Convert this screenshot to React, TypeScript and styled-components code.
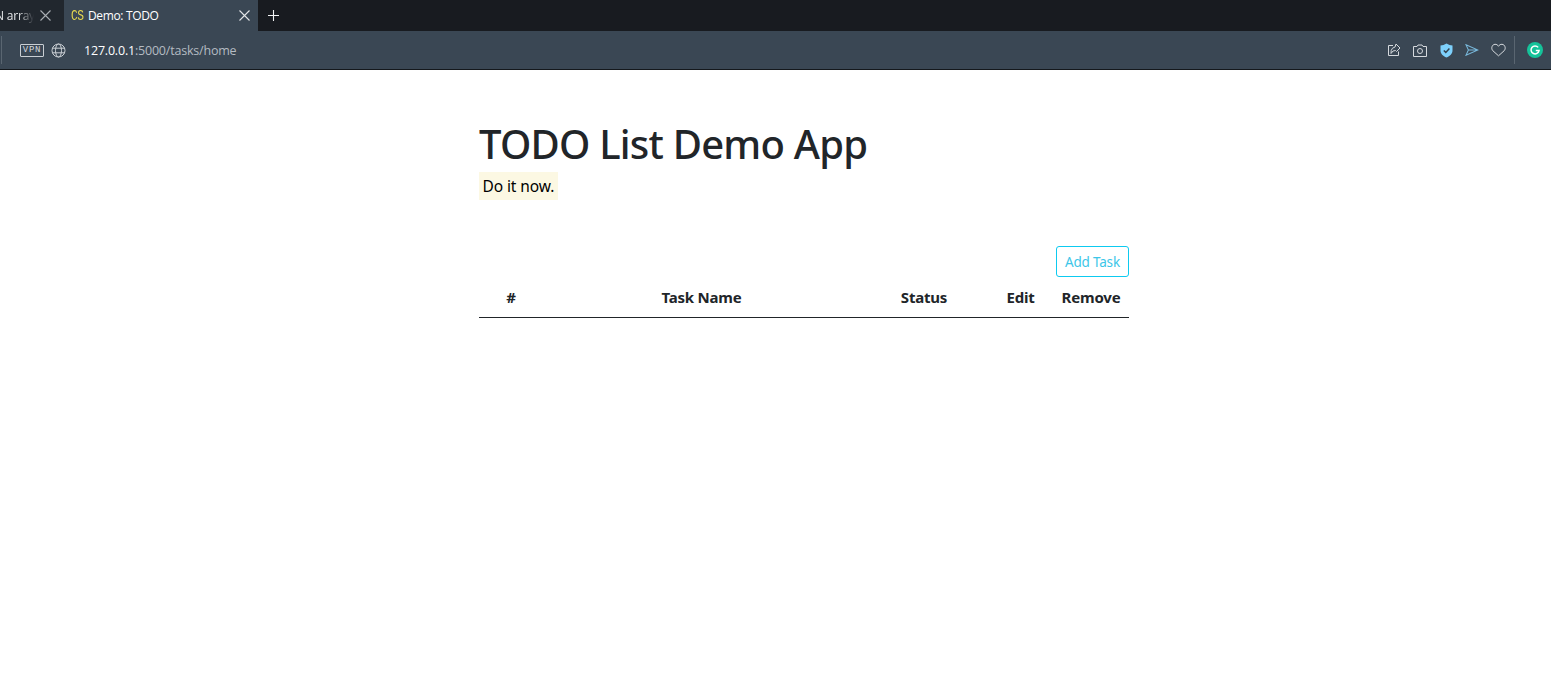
import { createGlobalStyle } from 'styled-components';
import styled from 'styled-components';

const GlobalStyle = createGlobalStyle`
  html, body {
    margin: 0;
    padding: 0;
    background: #fff;
  }
  body {
    font-family: "Noto Sans", "Open Sans", sans-serif;
    color: #212529;
  }
`;

const CloseIcon = () => (
  <svg width="11" height="11" viewBox="0 0 11 11" fill="none" stroke="currentColor" strokeWidth="1.1">
    <path d="M0.5 0.5 10.5 10.5M10.5 0.5 0.5 10.5" />
  </svg>
);

const App = () => {
  return (
    <>
      <GlobalStyle />
      <Browser>
        <TabStrip>
          <InactiveTab>
            <InactiveTitle>N array</InactiveTitle>
            <InactiveClose>
              <CloseIcon />
            </InactiveClose>
          </InactiveTab>
          <ActiveTab>
            <Favicon>CS</Favicon>
            <TabTitle>Demo: TODO</TabTitle>
            <ActiveClose>
              <CloseIcon />
            </ActiveClose>
          </ActiveTab>
          <NewTab>
            <svg width="11" height="11" viewBox="0 0 11 11" stroke="currentColor" strokeWidth="1.1">
              <path d="M5.5 0V11M0 5.5H11" />
            </svg>
          </NewTab>
        </TabStrip>
        <Toolbar>
          <ToolbarDivider />
          <VpnBadge>VPN</VpnBadge>
          <GlobeWrap>
            <svg width="15" height="15" viewBox="0 0 15 15" fill="none" stroke="#c9ced3" strokeWidth="1">
              <circle cx="7.5" cy="7.5" r="6.5" />
              <ellipse cx="7.5" cy="7.5" rx="3" ry="6.5" />
              <path d="M1.3 5.2H13.7M1.3 9.8H13.7" />
            </svg>
          </GlobeWrap>
          <Url>
            <strong>127.0.0.1</strong>:5000/tasks/home
          </Url>
          <ToolIcons>
            <ToolIcon>
              <svg width="14" height="14" viewBox="0 0 14 14" fill="none" stroke="#d5d9dd" strokeWidth="1">
                <path d="M6 2.5H1.5V12.5H11.5V8.5" />
                <path d="M9 1 13 5 9.5 8.5 8.5 7.5 6 8 4 10.5 4.2 7.5 5.5 5.2 8 4Z" />
              </svg>
            </ToolIcon>
            <ToolIcon>
              <svg width="14" height="13" viewBox="0 0 14 13" fill="none" stroke="#d5d9dd" strokeWidth="1">
                <path d="M0.5 2.5H4L5 1H9L10 2.5H13.5V12.5H0.5Z" />
                <circle cx="7" cy="7" r="2.5" />
              </svg>
            </ToolIcon>
            <ToolIcon>
              <svg width="13" height="15" viewBox="0 0 13 15">
                <path d="M6.5 0.5C8.5 1.8 10.5 2.3 12.5 2.4V7.5C12.5 10.8 10 13.2 6.5 14.5 3 13.2 0.5 10.8 0.5 7.5V2.4C2.5 2.3 4.5 1.8 6.5 0.5Z" fill="#7dd0fb" />
                <path d="M3.8 7.5 5.8 9.4 9.4 5.6" fill="none" stroke="#33424f" strokeWidth="1.5" />
              </svg>
            </ToolIcon>
            <ToolIcon>
              <svg width="14" height="12" viewBox="0 0 15 13" fill="none" stroke="#79b9dc" strokeWidth="1.1">
                <path d="M1 0.8 14 6.5 1 12.2 3.6 6.5ZM3.6 6.5H14" />
              </svg>
            </ToolIcon>
            <ToolIcon>
              <svg width="15" height="14" viewBox="0 0 15 13" fill="none" stroke="#d5d9dd" strokeWidth="1">
                <path d="M7.5 12.3 1.8 7.2C-0.2 5 0.9 1 4 0.8 5.5 0.7 6.8 1.5 7.5 2.8 8.2 1.5 9.5 0.7 11 0.8 14.1 1 15.2 5 13.2 7.2Z" />
              </svg>
            </ToolIcon>
          </ToolIcons>
          <ToolbarEndDivider />
          <GrammarlyBadge>
            <svg width="16" height="16" viewBox="0 0 16 16">
              <circle cx="8" cy="8" r="8" fill="#15c39a" />
              <path d="M11.2 5.4A4 4 0 1 0 12 8.6H8.8" fill="none" stroke="#fff" strokeWidth="1.5" />
            </svg>
          </GrammarlyBadge>
        </Toolbar>
      </Browser>
      <Page>
        <Title>TODO List Demo App</Title>
        <Tagline>Do it now.</Tagline>
        <Actions>
          <AddButton type="button">Add Task</AddButton>
        </Actions>
        <TaskTable>
          <colgroup>
            <col width="64" />
            <col width="317" />
            <col width="128" />
            <col width="65" />
            <col width="76" />
          </colgroup>
          <thead>
            <tr>
              <HeaderCell>#</HeaderCell>
              <HeaderCell>Task Name</HeaderCell>
              <HeaderCell>Status</HeaderCell>
              <HeaderCell>Edit</HeaderCell>
              <HeaderCell>Remove</HeaderCell>
            </tr>
          </thead>
        </TaskTable>
      </Page>
    </>
  );
};
export default App;

const Browser = styled.div`
  display: flex;
  flex-direction: column;
  font-family: "Open Sans", "Noto Sans", sans-serif;
`;

const TabStrip = styled.div`
  display: flex;
  align-items: stretch;
  height: 31px;
  background-color: #181b20;
`;

const InactiveTab = styled.div`
  display: flex;
  align-items: center;
  justify-content: space-between;
  width: 64px;
  padding-right: 13px;
  box-sizing: border-box;
  overflow: hidden;
  background-color: #21272e;
`;

const InactiveTitle = styled.span`
  margin-left: -5px;
  width: 39px;
  overflow: hidden;
  white-space: nowrap;
  font-size: 12px;
  letter-spacing: -0.2px;
  color: #e6e8ea;
  -webkit-mask-image: linear-gradient(to right, #000 60%, transparent 100%);
  mask-image: linear-gradient(to right, #000 60%, transparent 100%);
`;

const InactiveClose = styled.span`
  display: flex;
  color: #a9aeb3;
`;

const ActiveTab = styled.div`
  display: flex;
  align-items: center;
  width: 194px;
  padding: 0 8px 0 7px;
  box-sizing: border-box;
  background-color: #3a4754;
`;

const Favicon = styled.span`
  width: 17px;
  font-family: "Liberation Mono", monospace;
  font-size: 14px;
  letter-spacing: -0.5px;
  color: #e6d94f;
  transform: scaleX(0.8);
  transform-origin: left center;
`;

const TabTitle = styled.span`
  flex: 1;
  font-size: 12px;
  letter-spacing: -0.35px;
  color: #fff;
`;

const ActiveClose = styled.span`
  display: flex;
  color: #e3e5e7;
`;

const NewTab = styled.span`
  display: flex;
  align-items: center;
  margin-left: 10px;
  color: #f2f3f4;
`;

const Toolbar = styled.div`
  display: flex;
  align-items: center;
  height: 38px;
  border-bottom: 1px solid #14181c;
  background-color: #3a4754;
`;

const ToolbarDivider = styled.span`
  width: 1px;
  height: 28px;
  margin-left: 1px;
  background-color: #5a6671;
`;

const VpnBadge = styled.span`
  display: flex;
  align-items: center;
  justify-content: center;
  width: 22px;
  height: 11px;
  margin-left: 18px;
  border: 1px solid #c9ced3;
  border-radius: 1px;
  font-family: "Liberation Mono", monospace;
  font-size: 9px;
  letter-spacing: 0.8px;
  color: #d5d9dd;
`;

const GlobeWrap = styled.span`
  display: flex;
  margin-left: 7px;
`;

const Url = styled.span`
  margin-left: 18px;
  font-size: 12.5px;
  letter-spacing: -0.2px;
  color: #b4bbc2;
  strong {
    font-weight: 400;
    color: #fff;
  }
`;

const ToolIcons = styled.div`
  display: flex;
  align-items: center;
  margin-left: auto;
`;

const ToolIcon = styled.span`
  display: flex;
  align-items: center;
  justify-content: center;
  width: 26px;
`;

const ToolbarEndDivider = styled.span`
  width: 1px;
  height: 28px;
  margin-left: 3px;
  background-color: #5a6671;
`;

const GrammarlyBadge = styled.span`
  display: flex;
  margin: 0 8px 0 12px;
`;

const Page = styled.main`
  width: 650px;
  margin-left: 479px;
  padding-top: 46px;
`;

const Title = styled.h1`
  margin: 0;
  font-family: "Noto Sans", "Open Sans", sans-serif;
  font-size: 40px;
  font-weight: 500;
  line-height: 56px;
  letter-spacing: -0.77px;
  color: #212529;
`;

const Tagline = styled.mark`
  display: block;
  width: fit-content;
  height: 28px;
  margin-top: 0;
  padding: 0 3.5px;
  font-size: 15.5px;
  line-height: 28px;
  letter-spacing: -0.1px;
  color: #000;
  background-color: #fcf8e3;
`;

const Actions = styled.div`
  display: flex;
  justify-content: flex-end;
  margin-top: 46px;
`;

const AddButton = styled.button`
  width: 73px;
  height: 31px;
  padding: 0;
  border: 1px solid #0dcaf0;
  border-radius: 3px;
  background: #fff;
  font-family: "Noto Sans", "Open Sans", sans-serif;
  font-size: 13.5px;
  letter-spacing: -0.2px;
  color: #3cc6e8;
`;

const TaskTable = styled.table`
  width: 650px;
  table-layout: fixed;
  border-collapse: collapse;
  border-bottom: 1px solid #212529;
`;

const HeaderCell = styled.th`
  height: 40px;
  padding: 0;
  font-size: 15px;
  font-weight: 700;
  letter-spacing: -0.2px;
  text-align: center;
  color: #212529;
`;
